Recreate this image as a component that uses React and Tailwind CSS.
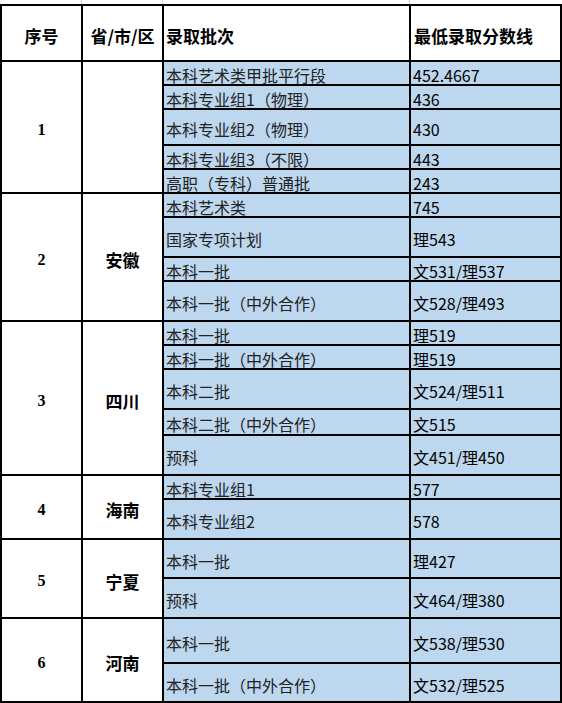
import React from 'react';

// 各省录取分数线
const groups = [
    {
        no: '1',
        province: '',
        rows: [
            { name: '本科艺术类甲批平行段', score: '452.4667', h: 'h-[22px]' },
            { name: '本科专业组1（物理）', score: '436', h: 'h-[22px]' },
            { name: '本科专业组2（物理）', score: '430', h: 'h-[34px]' },
            { name: '本科专业组3（不限）', score: '443', h: 'h-[22px]' },
            { name: '高职（专科）普通批', score: '243', h: 'h-[22px]' }
        ]
    },
    {
        no: '2',
        province: '安徽',
        rows: [
            { name: '本科艺术类', score: '745', h: 'h-[22px]' },
            { name: '国家专项计划', score: '理543', h: 'h-[38px]' },
            { name: '本科一批', score: '文531/理537', h: 'h-[22px]' },
            { name: '本科一批（中外合作）', score: '文528/理493', h: 'h-[38px]' }
        ]
    },
    {
        no: '3',
        province: '四川',
        rows: [
            { name: '本科一批', score: '理519', h: 'h-[22px]' },
            { name: '本科一批（中外合作）', score: '理519', h: 'h-[22px]' },
            { name: '本科二批', score: '文524/理511', h: 'h-[38px]' },
            { name: '本科二批（中外合作）', score: '文515', h: 'h-[24px]' },
            { name: '预科', score: '文451/理450', h: 'h-[38px]' }
        ]
    },
    {
        no: '4',
        province: '海南',
        rows: [
            { name: '本科专业组1', score: '577', h: 'h-[22px]' },
            { name: '本科专业组2', score: '578', h: 'h-[38px]' }
        ]
    },
    {
        no: '5',
        province: '宁夏',
        rows: [
            { name: '本科一批', score: '理427', h: 'h-[37px]' },
            { name: '预科', score: '文464/理380', h: 'h-[38px]' }
        ]
    },
    {
        no: '6',
        province: '河南',
        rows: [
            { name: '本科一批', score: '文538/理530', h: 'h-[43px]' },
            { name: '本科一批（中外合作）', score: '文532/理525', h: 'h-[37px]' }
        ]
    }
];

const App = () => {
    return (
        <div className="w-[562px] h-[703px] bg-white font-['Noto_Sans_CJK_SC',sans-serif] text-black">
            {/* sheet gridlines above the table */}
            <div className="flex h-[4px]">
                <div className="w-[82px] border-r border-[#d9d9d9]"></div>
                <div className="w-[81px] border-r border-[#d9d9d9]"></div>
                <div className="w-[247px] border-r border-[#d9d9d9]"></div>
            </div>

            <div className="border-2 border-black">
                {/* Header */}
                <div className="flex h-[56px] border-b-2 border-black font-bold text-[17px] leading-[17px]">
                    <div className="w-[81px] border-r-2 border-black flex items-center justify-center pt-[4px]">序号</div>
                    <div className="w-[81px] border-r-2 border-black flex items-center justify-center pt-[4px]">省/市/区</div>
                    <div className="w-[247px] border-r-2 border-black flex items-center pl-[2px] pt-[4px]">录取批次</div>
                    <div className="flex-1 flex items-center pl-[3px] pt-[4px]">最低录取分数线</div>
                </div>

                {groups.map((g, gi) => (
                    <div key={g.no} className={`flex ${gi < groups.length - 1 ? 'border-b-2 border-black' : ''}`}>
                        <div className="w-[81px] shrink-0 border-r-2 border-black flex items-center justify-center pt-[5px] font-['Liberation_Serif',serif] font-bold text-[16px] leading-[16px]">
                            {g.no}
                        </div>
                        <div className="w-[81px] shrink-0 border-r-2 border-black flex items-center justify-center pt-[5px] font-bold text-[17px] leading-[17px]">
                            {g.province}
                        </div>
                        <div className="flex-1 flex flex-col bg-[#bdd7ee]">
                            {g.rows.map((r, ri) => (
                                <div
                                    key={ri}
                                    className={`flex ${r.h} box-content ${ri < g.rows.length - 1 ? 'border-b-2 border-black' : ''}`}
                                >
                                    <div className="w-[247px] shrink-0 border-r-2 border-black flex items-center pl-[2px] pt-[4px] text-[16px] leading-[16px] text-[#222] whitespace-nowrap">
                                        {r.name}
                                    </div>
                                    <div className="flex-1 flex items-center pl-[2px] pt-[4px] text-[16px] leading-[16px] whitespace-nowrap">
                                        {r.score}
                                    </div>
                                </div>
                            ))}
                        </div>
                    </div>
                ))}
            </div>
        </div>
    );
};

export default App;
